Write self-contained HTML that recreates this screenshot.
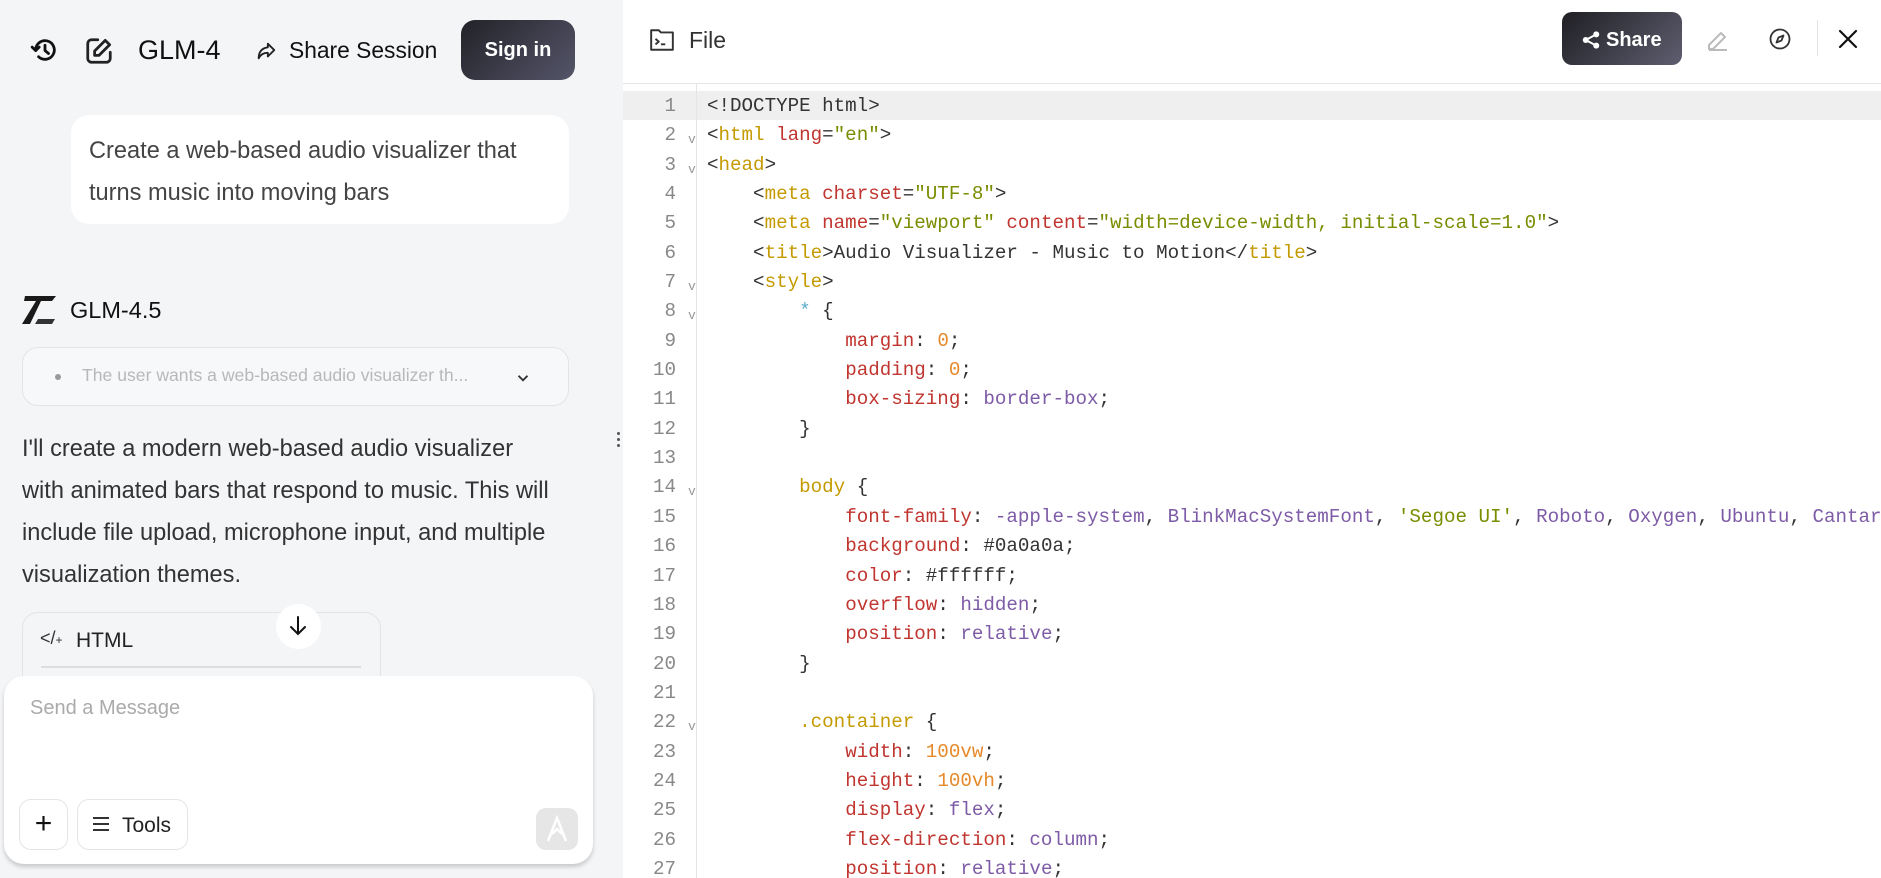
<!DOCTYPE html>
<html><head><meta charset="utf-8">
<style>
*{margin:0;padding:0;box-sizing:border-box}
body{width:1881px;height:878px;overflow:hidden;font-family:"Liberation Sans",sans-serif;background:#fff;position:relative}
.left{position:absolute;left:0;top:0;width:623px;height:878px;background:#f4f5f7;overflow:hidden}
.abs{position:absolute}
.right{position:absolute;left:623px;top:0;width:1258px;height:878px;background:#fff;overflow:hidden}
.hdr{position:absolute;left:0;top:0;width:1258px;height:84px;border-bottom:1px solid #e5e5e5}
.code{position:absolute;left:0;top:92px;width:1258px;font-family:"Liberation Mono",monospace;font-size:19.2px;color:#333}
.ln{height:29.35px;line-height:29.35px;position:relative;white-space:pre}
.ln .n{position:absolute;left:0;width:53px;text-align:right;color:#888}
.ln .f{position:absolute;left:65px;top:4px;color:#999;font-size:13px}
.ln .c{position:absolute;left:84px}
.t{color:#c49a00}.a{color:#c0352f}.s{color:#7a8c00}.p{color:#c0352f}.v{color:#7d5ba6}.o{color:#e5892a}.k{color:#5aa9c8}
</style></head><body>
<div class="left">
  <svg class="abs" style="left:30px;top:36px" width="30" height="28" viewBox="0 0 24 24" fill="none" stroke="#111" stroke-width="2.4" stroke-linecap="round" stroke-linejoin="round"><path d="M4 12a8 8 0 1 1 2.5 5.8"/><path d="M1 9.5l3 3 3-3"/><path d="M12 8v4.5l3 2.5"/></svg>
  <svg class="abs" style="left:84px;top:36px" width="30" height="30" viewBox="0 0 24 24" fill="none" stroke="#222" stroke-width="2.2" stroke-linecap="round" stroke-linejoin="round"><path d="M11 3H6a3 3 0 0 0-3 3v12a3 3 0 0 0 3 3h12a3 3 0 0 0 3-3v-5"/><path d="M17 3.5l3.5 3.5L12 15.5H8.5V12z"/></svg>
  <div class="abs" style="left:138px;top:35px;font-size:27px;color:#111">GLM-4</div>
  <svg class="abs" style="left:255px;top:40px" width="22" height="22" viewBox="0 0 24 24" fill="none" stroke="#222" stroke-width="2" stroke-linejoin="round"><path d="M14 4l7 7-7 7v-4c-5 0-8 2-10 6 0-7 3-11 10-12z"/></svg>
  <div class="abs" style="left:289px;top:37px;font-size:22.8px;color:#111">Share Session</div>
  <div class="abs" style="left:461px;top:20px;width:114px;height:60px;border-radius:14px;background:linear-gradient(135deg,#222228,#55556a);color:#fff;font-size:20px;font-weight:bold;text-align:center;line-height:60px">Sign in</div>

  <div class="abs" style="left:71px;top:115px;width:498px;height:109px;background:#fff;border-radius:18px"></div>
  <div class="abs" style="left:89px;top:130px;font-size:23.6px;color:#444;line-height:42px">Create a web-based audio visualizer that<br>turns music into moving bars</div>

  <svg class="abs" style="left:22px;top:296px" width="34" height="28" viewBox="0 0 34 28"><path d="M3 0h31l-4 5H19L8 28H0L14 5H2z" fill="#1a1a1a"/><path d="M16 23h17l-3 5H13z" fill="#333"/></svg>
  <div class="abs" style="left:70px;top:297px;font-size:23.5px;color:#111">GLM-4.5</div>

  <div class="abs" style="left:22px;top:347px;width:547px;height:59px;border:1px solid #e3e4e6;border-radius:16px;background:#f7f8f9"></div>
  <div class="abs" style="left:55px;top:374px;width:6px;height:6px;border-radius:3px;background:#999"></div>
  <div class="abs" style="left:82px;top:365px;font-size:17.6px;color:#b8b8b8">The user wants a web-based audio visualizer th...</div>
  <svg class="abs" style="left:514px;top:369px" width="18" height="18" viewBox="0 0 24 24" fill="none" stroke="#333" stroke-width="2.5"><path d="M6 9l6 6 6-6"/></svg>

  <div class="abs" style="left:22px;top:428px;font-size:23.6px;color:#333;line-height:42px">I'll create a modern web-based audio visualizer<br>with animated bars that respond to music. This will<br>include file upload, microphone input, and multiple<br>visualization themes.</div>

  <div class="abs" style="left:22px;top:612px;width:359px;height:120px;border:1px solid #e3e4e6;border-radius:16px"></div>
  <div class="abs" style="left:40px;top:628px;font-size:18px;color:#333">&lt;/<span style="font-size:12px">+</span></div>
  <div class="abs" style="left:76px;top:629px;font-size:21px;color:#222">HTML</div>
  <div class="abs" style="left:41px;top:666px;width:320px;height:2px;background:#ddd"></div>
  <div class="abs" style="left:276px;top:604px;width:45px;height:45px;border-radius:50%;background:#fff;text-align:center"></div>
  <svg class="abs" style="left:286px;top:614px" width="24" height="24" viewBox="0 0 24 24" fill="none" stroke="#111" stroke-width="2" stroke-linecap="round"><path d="M12 3v17M5 13l7 7 7-7"/></svg>

  <div class="abs" style="left:617px;top:432px;width:3px;height:3px;background:#555;border-radius:2px;box-shadow:0 6px 0 #555,0 12px 0 #555"></div>

  <div class="abs" style="left:4px;top:676px;width:589px;height:188px;background:#fff;border-radius:20px;box-shadow:0 3px 4px rgba(0,0,0,.18)"></div>
  <div class="abs" style="left:30px;top:697px;font-size:20px;color:#aaa">Send a Message</div>
  <div class="abs" style="left:19px;top:799px;width:49px;height:51px;border:1px solid #e5e5e5;border-radius:12px;font-size:30px;text-align:center;line-height:48px;color:#111">+</div>
  <div class="abs" style="left:77px;top:799px;width:111px;height:51px;border:1px solid #e5e5e5;border-radius:12px"></div>
  <div class="abs" style="left:93px;top:817px;width:16px;height:2px;background:#333;box-shadow:0 6px 0 #333,0 12px 0 #333"></div>
  <div class="abs" style="left:122px;top:814px;font-size:21px;color:#222">Tools</div>
  <div class="abs" style="left:536px;top:808px;width:42px;height:42px;border-radius:10px;background:#e6e6e6"></div>
  <svg class="abs" style="left:545px;top:815px" width="24" height="28" viewBox="0 0 24 28" fill="none" stroke="#fff" stroke-width="2.5"><path d="M3 26L12 3l9 23M7 19l5-5 5 5"/></svg>
</div>

<div class="right">
  <div class="hdr">
    <svg class="abs" style="left:26px;top:27px" width="26" height="26" viewBox="0 0 24 24" fill="none" stroke="#333" stroke-width="1.8" stroke-linejoin="round"><path d="M2 3h7l2 2h11v16H2z"/><path d="M6 11l3 2.5L6 16M11 16h4"/></svg>
    <div class="abs" style="left:66px;top:27px;font-size:23px;color:#333">File</div>
    <div class="abs" style="left:939px;top:12px;width:120px;height:53px;border-radius:10px;background:linear-gradient(135deg,#1f1f24,#5e5e70)"></div>
    <svg class="abs" style="left:959px;top:31px" width="18" height="18" viewBox="0 0 24 24" fill="#fff"><circle cx="19" cy="4.5" r="4"/><circle cx="5" cy="12" r="4"/><circle cx="19" cy="19.5" r="4"/><path d="M5 12L19 4.5M5 12l14 7.5" stroke="#fff" stroke-width="2.5"/></svg>
    <div class="abs" style="left:983px;top:29px;font-size:20px;color:#fff;font-weight:bold">Share</div>
    <svg class="abs" style="left:1083px;top:28px" width="24" height="24" viewBox="0 0 24 24" fill="none" stroke="#bbb" stroke-width="2" stroke-linejoin="round"><path d="M3 17L15 5l4 4L7 21H3zM3 22h18"/></svg>
    <svg class="abs" style="left:1145px;top:27px" width="24" height="24" viewBox="0 0 24 24" fill="none" stroke="#333" stroke-width="1.8"><circle cx="12" cy="12" r="9.5"/><path d="M15.5 8.5l-2 5-5 2 2-5z" stroke-linejoin="round"/></svg>
    <div class="abs" style="left:1194px;top:20px;width:1px;height:36px;background:#e3e3e3"></div>
    <svg class="abs" style="left:1213px;top:27px" width="24" height="24" viewBox="0 0 24 24" fill="none" stroke="#111" stroke-width="2.2" stroke-linecap="round"><path d="M4 4l16 16M20 4L4 20"/></svg>
  </div>
  <div class="abs" style="left:0;top:91px;width:1258px;height:29px;background:#efefef"></div>
  <div class="abs" style="left:73px;top:84px;width:1px;height:794px;background:#e5e5e5"></div>
  <div class="code">
<div class="ln"><span class="n">1</span><span class="c">&lt;!DOCTYPE html&gt;</span></div>
<div class="ln"><span class="n">2</span><span class="f">v</span><span class="c">&lt;<span class="t">html</span> <span class="a">lang</span>=<span class="s">"en"</span>&gt;</span></div>
<div class="ln"><span class="n">3</span><span class="f">v</span><span class="c">&lt;<span class="t">head</span>&gt;</span></div>
<div class="ln"><span class="n">4</span><span class="c">    &lt;<span class="t">meta</span> <span class="a">charset</span>=<span class="s">"UTF-8"</span>&gt;</span></div>
<div class="ln"><span class="n">5</span><span class="c">    &lt;<span class="t">meta</span> <span class="a">name</span>=<span class="s">"viewport"</span> <span class="a">content</span>=<span class="s">"width=device-width, initial-scale=1.0"</span>&gt;</span></div>
<div class="ln"><span class="n">6</span><span class="c">    &lt;<span class="t">title</span>&gt;Audio Visualizer - Music to Motion&lt;/<span class="t">title</span>&gt;</span></div>
<div class="ln"><span class="n">7</span><span class="f">v</span><span class="c">    &lt;<span class="t">style</span>&gt;</span></div>
<div class="ln"><span class="n">8</span><span class="f">v</span><span class="c">        <span class="k">*</span> {</span></div>
<div class="ln"><span class="n">9</span><span class="c">            <span class="p">margin</span>: <span class="o">0</span>;</span></div>
<div class="ln"><span class="n">10</span><span class="c">            <span class="p">padding</span>: <span class="o">0</span>;</span></div>
<div class="ln"><span class="n">11</span><span class="c">            <span class="p">box-sizing</span>: <span class="v">border-box</span>;</span></div>
<div class="ln"><span class="n">12</span><span class="c">        }</span></div>
<div class="ln"><span class="n">13</span><span class="c"></span></div>
<div class="ln"><span class="n">14</span><span class="f">v</span><span class="c">        <span class="t">body</span> {</span></div>
<div class="ln"><span class="n">15</span><span class="c">            <span class="p">font-family</span>: <span class="v">-apple-system</span>, <span class="v">BlinkMacSystemFont</span>, <span class="s">'Segoe UI'</span>, <span class="v">Roboto</span>, <span class="v">Oxygen</span>, <span class="v">Ubuntu</span>, <span class="v">Cantarell</span></span></div>
<div class="ln"><span class="n">16</span><span class="c">            <span class="p">background</span>: #0a0a0a;</span></div>
<div class="ln"><span class="n">17</span><span class="c">            <span class="p">color</span>: #ffffff;</span></div>
<div class="ln"><span class="n">18</span><span class="c">            <span class="p">overflow</span>: <span class="v">hidden</span>;</span></div>
<div class="ln"><span class="n">19</span><span class="c">            <span class="p">position</span>: <span class="v">relative</span>;</span></div>
<div class="ln"><span class="n">20</span><span class="c">        }</span></div>
<div class="ln"><span class="n">21</span><span class="c"></span></div>
<div class="ln"><span class="n">22</span><span class="f">v</span><span class="c">        <span class="t">.container</span> {</span></div>
<div class="ln"><span class="n">23</span><span class="c">            <span class="p">width</span>: <span class="o">100vw</span>;</span></div>
<div class="ln"><span class="n">24</span><span class="c">            <span class="p">height</span>: <span class="o">100vh</span>;</span></div>
<div class="ln"><span class="n">25</span><span class="c">            <span class="p">display</span>: <span class="v">flex</span>;</span></div>
<div class="ln"><span class="n">26</span><span class="c">            <span class="p">flex-direction</span>: <span class="v">column</span>;</span></div>
<div class="ln"><span class="n">27</span><span class="c">            <span class="p">position</span>: <span class="v">relative</span>;</span></div>
  </div>
</div>
</body></html>
